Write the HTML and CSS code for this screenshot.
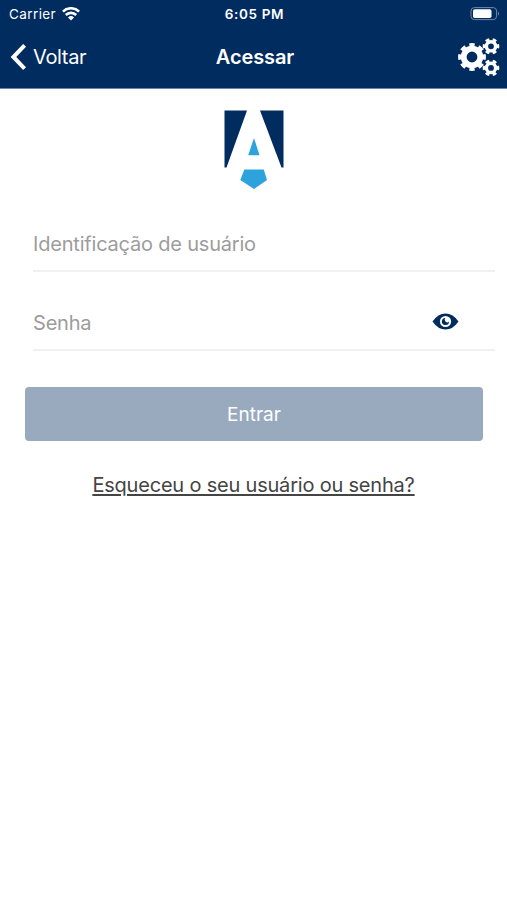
FILE: index.html
```html
<!DOCTYPE html>
<html lang="pt-BR">
<head>
  <meta charset="UTF-8" />
  <meta name="viewport" content="width=device-width, initial-scale=1.0" />
  <title>Acessar</title>
  <link rel="stylesheet" href="styles.css">
</head>
<body>
  <header class="header">
    <div class="status-bar">
      <div class="carrier">
        <span>Carrier</span>
        <svg width="18" height="14" viewBox="0 0 18 14" fill="none" stroke="#fff" stroke-width="2.6">
          <path d="M0.9 4.6 A11.5 11.5 0 0 1 17.1 4.6" />
          <path d="M3.8 8 A7.4 7.4 0 0 1 14.2 8" />
          <path d="M9 13.4 L6 10.5 A4.3 4.3 0 0 1 12 10.5 Z" fill="#fff" stroke="none" />
        </svg>
      </div>
      <span class="time">6:05 PM</span>
      <svg class="battery" width="30" height="14" viewBox="0 0 30 14">
        <rect x="1" y="0.6" width="25.6" height="12" rx="3.4" fill="none" stroke="#7388a5" />
        <rect x="3" y="2.2" width="18.5" height="8.8" rx="1.8" fill="#fff" />
        <path d="M28 4.6 Q30 6.8 28 8.8 Z" fill="#7388a5" />
      </svg>
    </div>
    <div class="nav-bar">
      <a class="back">
        <svg width="17" height="27" viewBox="0 0 17 27" fill="none" stroke="#fff" stroke-width="4">
          <path d="M14.6 1.3 L3.4 13 L14.6 24.7" />
        </svg>
        <span>Voltar</span>
      </a>
      <h1>Acessar</h1>
      <svg class="settings" width="42" height="40" viewBox="0 0 42 40" fill="none" stroke="#fff">
        <circle cx="14" cy="20" r="8.3" stroke-width="5.8" />
        <circle cx="14" cy="20" r="12" stroke-width="3.8" pathLength="80" stroke-dasharray="5.6 4.4" stroke-dashoffset="2.8" />
        <g id="smallGear">
          <circle cx="33" cy="9.3" r="4.6" stroke-width="3.4" />
          <circle cx="33" cy="9.3" r="6.9" stroke-width="2.8" pathLength="60" stroke-dasharray="5.4 4.6" stroke-dashoffset="2.7" />
        </g>
        <use href="#smallGear" y="21.6" />
      </svg>
    </div>
  </header>

  <main class="login">
    <svg class="logo" width="60" height="80" viewBox="0 0 60 80">
      <path d="M0.5 0.5 H23 L2.5 57.5 H0.5 Z" fill="#002c5f" />
      <path d="M36 0.5 H59.5 V57.5 H57.5 Z" fill="#002c5f" />
      <path d="M30 28 L35.5 45.3 H24.2 Z" fill="#2ca3dc" />
      <path d="M20.3 59.5 H39.7 L43 70 L30 79 L16.3 70 Z" fill="#2ca3dc" />
    </svg>

    <form class="form">
      <div class="field">
        <input type="text" placeholder="Identificação de usuário" />
      </div>
      <div class="field">
        <input class="password" type="password" placeholder="Senha" />
        <svg class="eye" width="27" height="17" viewBox="0 0 27 17">
          <path d="M0.5 8.5 Q6 0.5 13.5 0.5 Q21 0.5 26.5 8.5 Q21 16.5 13.5 16.5 Q6 16.5 0.5 8.5 Z" fill="#002c5f" />
          <circle cx="13.5" cy="8.5" r="5.6" fill="#fff" />
          <path d="M13.5 4.9 A3.6 3.6 0 1 0 17.1 8.5 A2.2 2.2 0 0 1 13.5 4.9 Z" fill="#002c5f" />
        </svg>
      </div>
      <button class="submit-btn" type="button">Entrar</button>
    </form>

    <a class="forgot" href="#">Esqueceu o seu usuário ou senha?</a>
  </main>
</body>
</html>
```

FILE: styles.css
```css
html, body {
  margin: 0;
  padding: 0;
  font-family: Inter, sans-serif;
  background: #ffffff;
}

.header {
  box-sizing: border-box;
  height: 89px;
  background: #002c5f;
  border-bottom: 1px solid #6a84a3;
  color: #ffffff;
}

.status-bar {
  display: grid;
  grid-template-columns: 1fr auto 1fr;
  align-items: center;
  height: 27px;
  padding: 0 7px 0 9px;
  font-size: 13.5px;
}

.carrier {
  display: flex;
  align-items: center;
  gap: 6px;
  letter-spacing: 0.4px;
}

.time {
  font-weight: 600;
  letter-spacing: 0.65px;
}

.battery {
  justify-self: end;
}

.nav-bar {
  display: grid;
  grid-template-columns: 1fr auto 1fr;
  align-items: center;
  height: 60px;
  padding: 0 7px 0 10px;
}

.back {
  display: flex;
  align-items: center;
  gap: 6px;
  font-size: 20px;
  letter-spacing: -0.35px;
}

h1 {
  margin: 0;
  font-size: 20px;
  font-weight: 600;
  letter-spacing: -0.1px;
}

.settings {
  justify-self: end;
}

.login {
  display: flex;
  flex-direction: column;
  align-items: center;
  padding-top: 21px;
}

.form {
  align-self: stretch;
  padding: 3px 12px 0 33px;
}

.field {
  display: flex;
  align-items: center;
  box-sizing: border-box;
  height: 79px;
  padding: 24px 36px 0 0;
  border-bottom: 2px solid #f1f1f1;
}

.field input {
  flex: 1;
  min-width: 0;
  padding: 0;
  border: none;
  outline: none;
  background: transparent;
  font-family: inherit;
  font-size: 20px;
  letter-spacing: -0.2px;
}

.field input::placeholder {
  color: #9c9c9c;
}

.eye {
  margin-bottom: 2px;
}

.submit-btn {
  display: block;
  width: 458px;
  height: 54px;
  margin: 36px 0 0 -8px;
  padding: 0;
  border: none;
  border-radius: 4px;
  background: #99aabf;
  color: #ffffff;
  font-family: inherit;
  font-size: 19px;
}

.forgot {
  margin-top: 32px;
  color: #444444;
  font-size: 20px;
  line-height: 24px;
  letter-spacing: -0.2px;
  text-underline-offset: 2px;
}
```
